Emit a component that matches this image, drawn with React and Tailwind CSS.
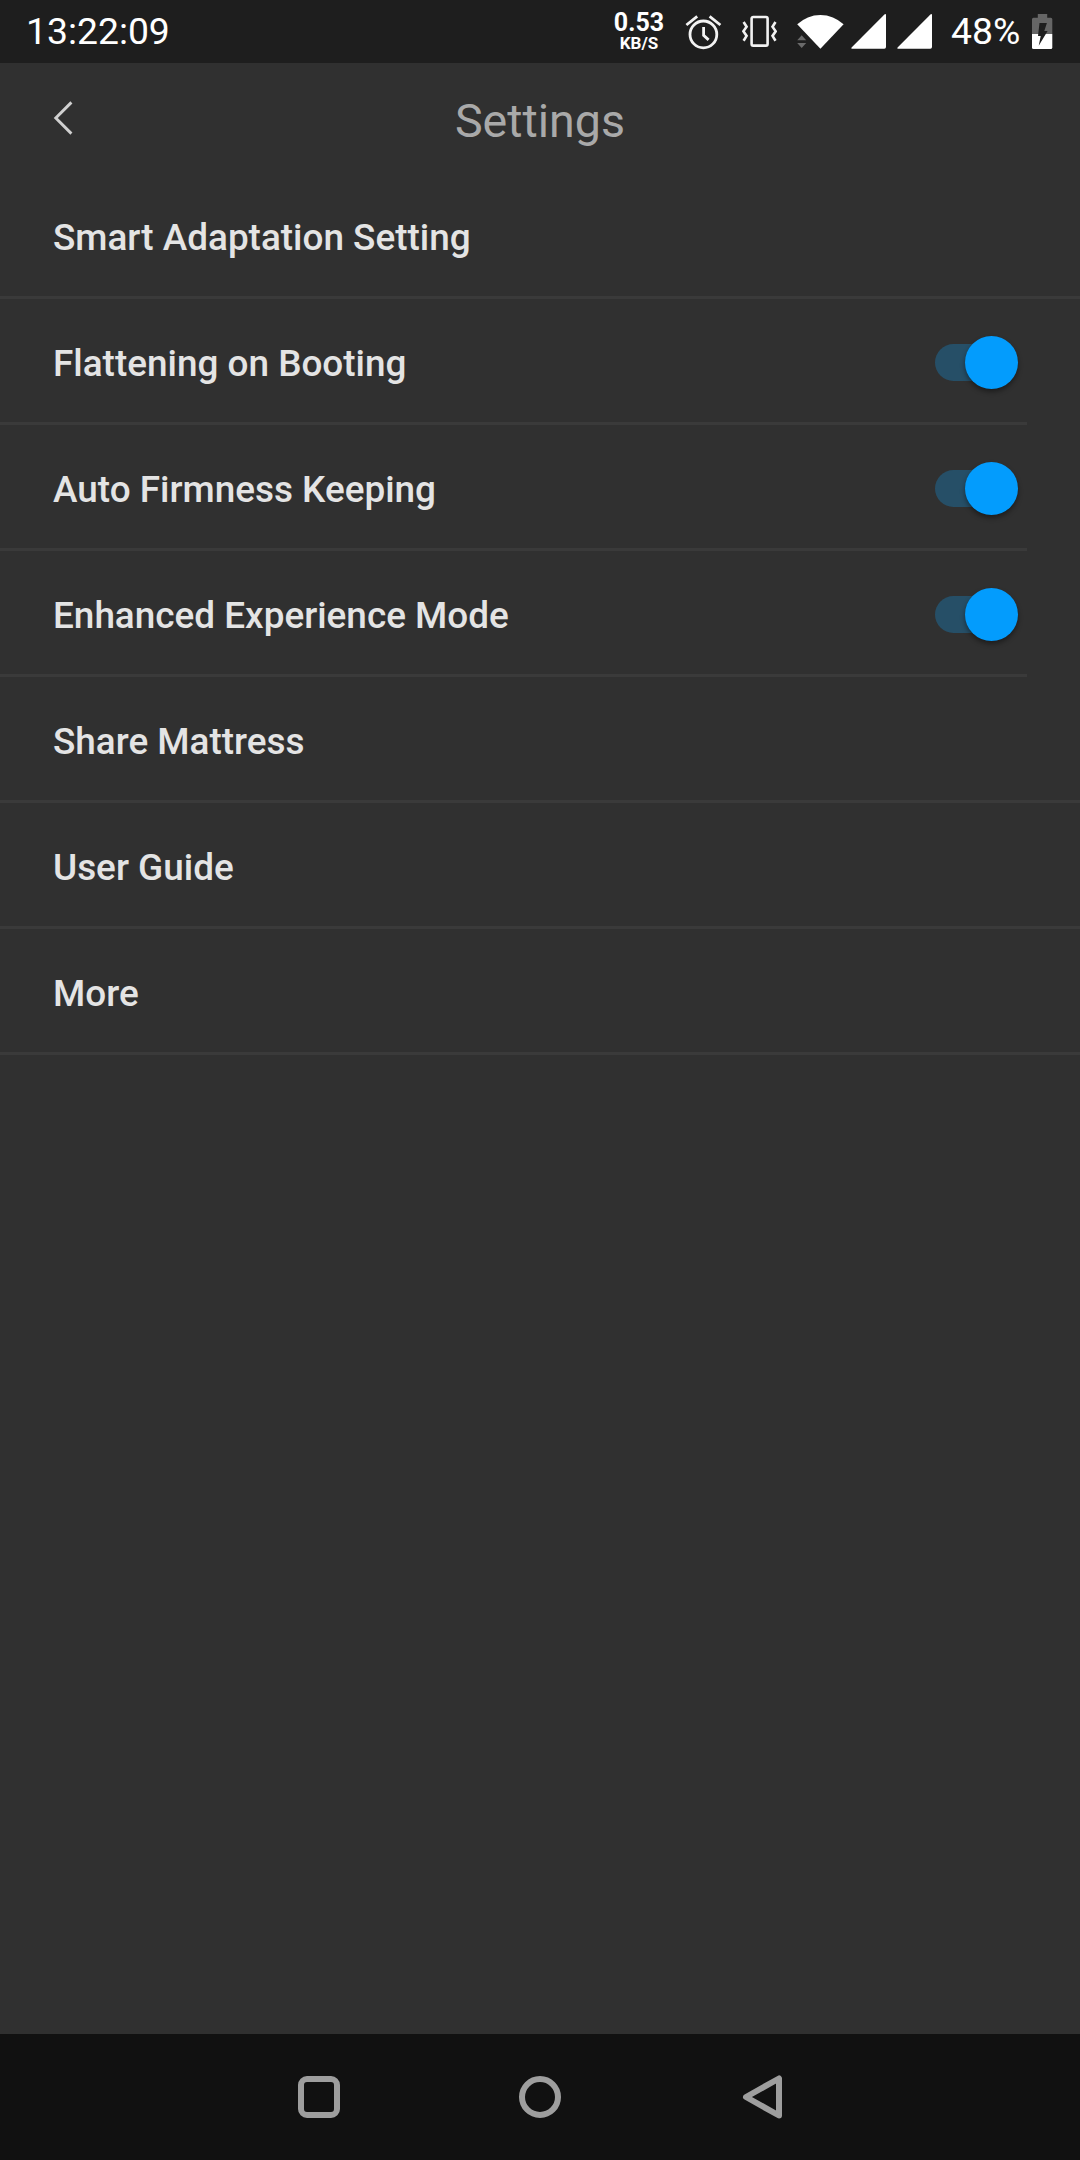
import React, { useState } from "react";

const initialItems = [
  { label: "Smart Adaptation Setting" },
  { label: "Flattening on Booting", toggle: true, on: true },
  { label: "Auto Firmness Keeping", toggle: true, on: true },
  { label: "Enhanced Experience Mode", toggle: true, on: true },
  { label: "Share Mattress" },
  { label: "User Guide" },
  { label: "More" },
];

const AlarmIcon = () => (
  <svg
    className="w-[37px] h-[37px] ml-[21px]"
    viewBox="0 0 37 37"
    fill="none"
    stroke="#f2f2f2"
    strokeWidth="2.8"
  >
    <circle cx="18.4" cy="21.4" r="13.4" />
    <path d="M18.6 14v8.3l5 4.6" />
    <path d="M1.4 12 12.2 3.4M24.6 3.4 35.4 12" />
  </svg>
);

const VibrateIcon = () => (
  <svg
    className="w-[35px] h-[37px] ml-5"
    viewBox="0 0 35 37"
    fill="none"
    stroke="#f2f2f2"
    strokeWidth="2.6"
  >
    <rect x="9.6" y="4" width="16" height="28.6" rx="1.6" />
    <path d="M1.6 9l3 4.7-3.2 4.6 3.2 4.6-3 4.9" />
    <path d="M33.5 9l-3 4.7 3.2 4.6-3.2 4.6 3 4.9" />
  </svg>
);

const WifiIcon = () => (
  <svg className="w-[49px] h-[37px] ml-[19px]" viewBox="0 0 49 37">
    <path d="M24.4 35.7 1.2 11.3a33.5 33.5 0 0 1 46.4 0z" fill="#fff" />
    <path d="M1.2 27.3h9l-4.5-5zM1.2 30h9l-4.5 5z" fill="#6a6a6a" />
  </svg>
);

const SignalIcon = ({ className }) => (
  <svg className={className} viewBox="0 0 35 37">
    <path
      d="M.6 34.4 33.4 1.4Q35 .4 35 2v32q0 1.7-1.7 1.7H1Q-.3 35.6.6 34.4z"
      fill="#fff"
    />
  </svg>
);

const BatteryIcon = () => (
  <svg className="w-[21px] h-[37px] ml-3" viewBox="0 0 21 37">
    <path
      d="M5.8 1h9.4v3.7h3.6q1.5 0 1.5 1.5V21H0V6.2q0-1.5 1.5-1.5h4.3z"
      fill="#666"
    />
    <path d="M0 21h20.3v13.5q0 1.5-1.5 1.5H1.5Q0 36 0 34.5z" fill="#fff" />
    <path d="M7.5 10h7.4l-2.6 8h3.3L6.7 32.7 8.7 23H6z" fill="#1e1e1e" />
  </svg>
);

const StatusBar = () => (
  <div className="flex h-[63px] items-center bg-[#1e1e1e] pl-[26px] pr-[27px] text-white">
    <span className="pb-0.5 text-[37.3px] leading-[60px]">13:22:09</span>
    <div className="ml-auto flex items-center">
      <div className="flex w-[50px] flex-col items-center pb-0.5 font-bold">
        <span className="text-[25px] leading-[25px]">0.53</span>
        <span className="text-[17px] leading-[17px]">KB/S</span>
      </div>
      <AlarmIcon />
      <VibrateIcon />
      <WifiIcon />
      <SignalIcon className="w-[35px] h-[37px] ml-1.5" />
      <SignalIcon className="w-[35px] h-[37px] ml-[11px]" />
      <span className="ml-[19px] w-[69px] whitespace-nowrap pb-0.5 text-[37.3px] leading-[60px]">
        48%
      </span>
      <BatteryIcon />
    </div>
  </div>
);

const Header = () => (
  <div className="grid h-[110px] grid-cols-3 items-center px-[53px]">
    <button aria-label="Back" className="w-5">
      <svg
        className="h-[34px] w-5"
        viewBox="0 0 20 34"
        fill="none"
        stroke="#d0d0d0"
        strokeWidth="2.9"
      >
        <path d="M18.4 1.4 2.8 17l15.6 15.6" />
      </svg>
    </button>
    <h1 className="pt-1.5 text-center text-[46.6px] leading-[60px] text-[#a9a9a9]">
      Settings
    </h1>
  </div>
);

const Toggle = ({ on, onClick }) => (
  <button
    role="switch"
    aria-checked={on}
    onClick={onClick}
    className="flex h-[53px] w-[83px] items-center"
  >
    <span className="flex h-[37px] w-[70px] items-center rounded-full bg-[#264f67]">
      <span
        className={
          on
            ? "ml-[30px] size-[53px] shrink-0 rounded-full bg-[#039cfd] shadow-[0_3px_5px_rgba(0,0,0,0.4)]"
            : "size-[53px] shrink-0 rounded-full bg-[#b9b9b9] shadow-[0_3px_5px_rgba(0,0,0,0.4)]"
        }
      />
    </span>
  </button>
);

const SettingRow = ({ item, onToggle }) => (
  <li className="flex h-[126px] flex-col">
    <div className="flex flex-1 items-center justify-between pl-[53px] pr-[62px] pt-[3px]">
      <span className="pt-1 text-[36.9px] font-medium leading-[48px] text-[#e4e4e4]">
        {item.label}
      </span>
      {item.toggle && <Toggle on={item.on} onClick={onToggle} />}
    </div>
    {/* Toggle rows have a divider that stops before the edge */}
    <div
      className={
        item.toggle ? "mr-[53px] h-[3px] bg-[#3a3a3a]" : "h-[3px] bg-[#3a3a3a]"
      }
    />
  </li>
);

const NavBar = () => (
  <div className="flex h-[126px] items-center justify-center gap-[179px] bg-[#111111]">
    <button
      aria-label="Recents"
      className="size-[42px] rounded-[9px] border-[6px] border-[#9e9e9e]"
    />
    <button
      aria-label="Home"
      className="size-[42px] rounded-full border-[6px] border-[#9e9e9e]"
    />
    <button aria-label="Back">
      <svg
        className="h-[44px] w-[42px]"
        viewBox="0 0 42 44"
        fill="none"
        stroke="#9e9e9e"
        strokeWidth="6"
        strokeLinejoin="round"
      >
        <path d="M39 3.5v37L6 22z" />
      </svg>
    </button>
  </div>
);

const App = () => {
  const [items, setItems] = useState(initialItems);

  const handleToggle = (index) => {
    setItems((prev) =>
      prev.map((item, i) => (i === index ? { ...item, on: !item.on } : item))
    );
  };

  return (
    <div className="flex h-[2160px] w-[1080px] flex-col bg-[#303030] font-[Roboto,sans-serif]">
      <StatusBar />
      <Header />
      <ul className="flex-1">
        {items.map((item, i) => (
          <SettingRow
            key={item.label}
            item={item}
            onToggle={() => handleToggle(i)}
          />
        ))}
      </ul>
      <NavBar />
    </div>
  );
};

export default App;
